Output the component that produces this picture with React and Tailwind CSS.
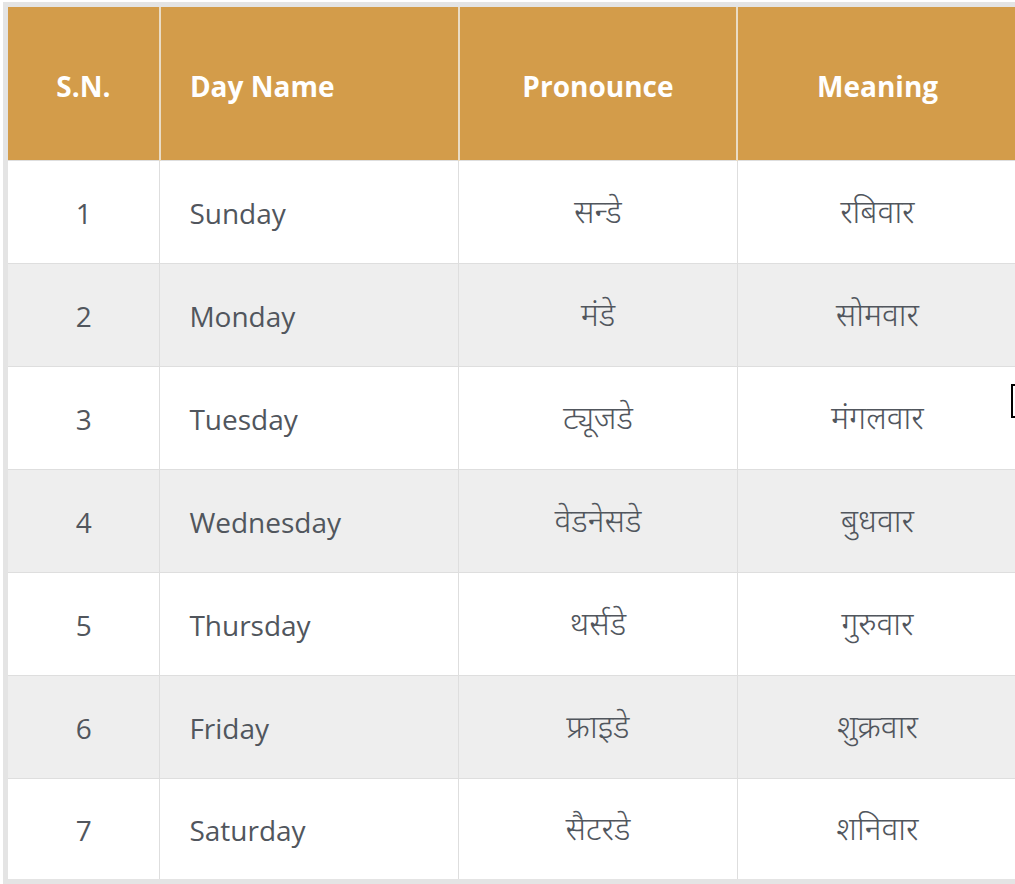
import React from 'react';

const days = [
  { sn: 1, name: 'Sunday', pron: 'सन्डे', meaning: 'रबिवार' },
  { sn: 2, name: 'Monday', pron: 'मंडे', meaning: 'सोमवार' },
  { sn: 3, name: 'Tuesday', pron: 'ट्यूजडे', meaning: 'मंगलवार' },
  { sn: 4, name: 'Wednesday', pron: 'वेडनेसडे', meaning: 'बुधवार' },
  { sn: 5, name: 'Thursday', pron: 'थर्सडे', meaning: 'गुरुवार' },
  { sn: 6, name: 'Friday', pron: 'फ्राइडे', meaning: 'शुक्रवार' },
  { sn: 7, name: 'Saturday', pron: 'सैटरडे', meaning: 'शनिवार' },
];

function App() {
  return (
    <div className="relative w-[1015px] h-[884px] overflow-hidden bg-white pt-[2px] pl-[3px] font-['Open_Sans','Noto_Sans',sans-serif]">
      <table className="w-[1020px] border-collapse table-fixed border-t-[5px] border-l-[5px] border-b-[5px] border-[#e4e4e4]">
        <colgroup>
          <col className="w-[154px]" />
          <col className="w-[298px]" />
          <col className="w-[278px]" />
          <col className="w-[285px]" />
        </colgroup>
        <thead>
          <tr className="h-[156px] bg-[#d39c4a] text-white text-[28px] font-bold">
            <th className="text-center pt-[4px] border-r-2 border-[#eadcc4]">S.N.</th>
            <th className="text-left pl-[29px] pt-[4px] border-r-2 border-[#eadcc4]">Day Name</th>
            <th className="text-center pt-[4px] border-r-2 border-[#eadcc4]">Pronounce</th>
            <th className="text-center pt-[4px] pr-[6px]">Meaning</th>
          </tr>
        </thead>
        <tbody className="text-[28px] text-[#51565d]">
          {days.map((d, i) => (
            <tr key={d.sn} className={`h-[103px] border-t border-[#dedede] ${i % 2 === 1 ? 'bg-[#eeeeee]' : 'bg-white'}`}>
              <td className="text-center pt-[2px] border-r border-[#dedede]">{d.sn}</td>
              <td className="text-left pl-[29px] pt-[2px] border-r border-[#dedede]">{d.name}</td>
              <td className="text-center text-[32px] font-light border-r border-[#dedede] pb-[2px]">{d.pron}</td>
              <td className="text-center text-[32px] font-light pr-[6px] pb-[2px]">{d.meaning}</td>
            </tr>
          ))}
        </tbody>
      </table>
      <div className="absolute left-[1011px] top-[384px] w-[10px] h-[34px] border-2 border-black" />
    </div>
  );
}

export default App;
